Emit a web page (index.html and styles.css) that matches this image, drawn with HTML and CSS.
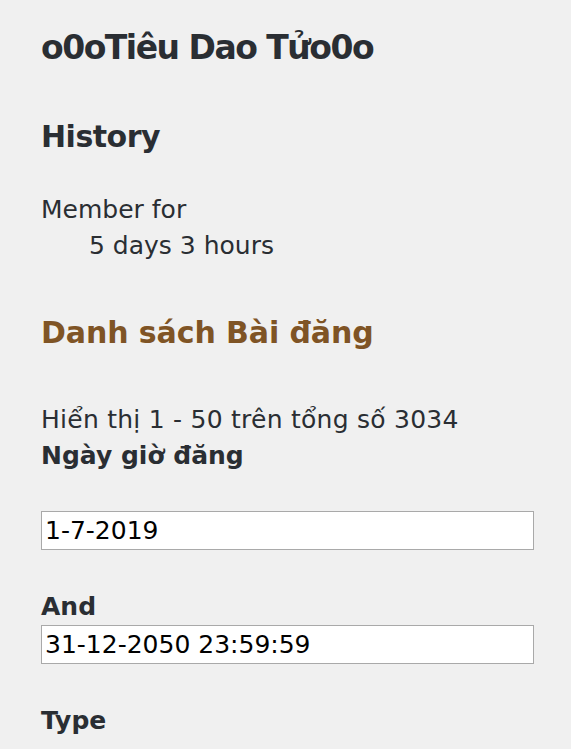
FILE: index.html
```html
<!DOCTYPE html>
<html lang="vi">
<head>
<meta charset="utf-8">
<title>o0oTiêu Dao Tửo0o</title>
<link rel="stylesheet" href="styles.css">
</head>
<body>
<main class="page">
  <h1 class="page-title">o0oTiêu Dao Tửo0o</h1>
  <section class="history">
    <h3 class="history-title">History</h3>
    <dl class="history-list">
      <dt class="history-term">Member for</dt>
      <dd class="history-value">5 days 3 hours</dd>
    </dl>
  </section>
  <section class="posts">
    <h2 class="posts-title">Danh sách Bài đăng</h2>
    <div class="posts-count">Hiển thị 1 - 50 trên tổng số 3034</div>
    <form class="filters">
      <label class="filter-label filter-label-first" for="d1">Ngày giờ đăng</label>
      <input class="filter-input" id="d1" type="text" value="1-7-2019">
      <label class="filter-label" for="d2">And</label>
      <input class="filter-input" id="d2" type="text" value="31-12-2050 23:59:59">
      <label class="filter-label" for="t">Type</label>
    </form>
  </section>
</main>
</body>
</html>
```
FILE: styles.css
```css
html, body {
  margin: 0;
  padding: 0;
  background: #f0f0f0;
}
body {
  font-family: "DejaVu Sans", Verdana, sans-serif;
  font-size: 25px;
  line-height: 36px;
  color: #2a2e33;
}
.page {
  padding: 27px 37px 0 41px;
}
.page-title {
  margin: 0;
  font-size: 33px;
  line-height: 41px;
  letter-spacing: -1.5px;
  font-weight: bold;
}
.history-title {
  margin: 51px 0 0;
  font-size: 30px;
  line-height: 36px;
  letter-spacing: -0.5px;
  font-weight: bold;
}
.history-list {
  margin: 37px 0 0;
}
.history-term {
  margin: 0;
}
.history-value {
  margin: 0 0 0 48px;
}
.posts-title {
  margin: 51px 0 0;
  font-size: 30px;
  line-height: 36px;
  letter-spacing: -0.1px;
  font-weight: bold;
  color: #7f5425;
}
.posts-count {
  margin-top: 51px;
  letter-spacing: 0.25px;
}
.filters {
  display: flex;
  flex-direction: column;
  margin: 0;
}
.filter-label {
  display: block;
  font-weight: bold;
  margin-top: 39px;
}
.filter-label-first {
  margin-top: 0;
  margin-bottom: 37px;
}
.filter-input {
  box-sizing: border-box;
  width: 493px;
  height: 39px;
  margin: 0;
  padding: 0 3px;
  border: 1px solid #a9a9a9;
  background: #fff;
  color: #000;
  font-family: "DejaVu Sans", Verdana, sans-serif;
  font-size: 25px;
  outline: none;
}
```
